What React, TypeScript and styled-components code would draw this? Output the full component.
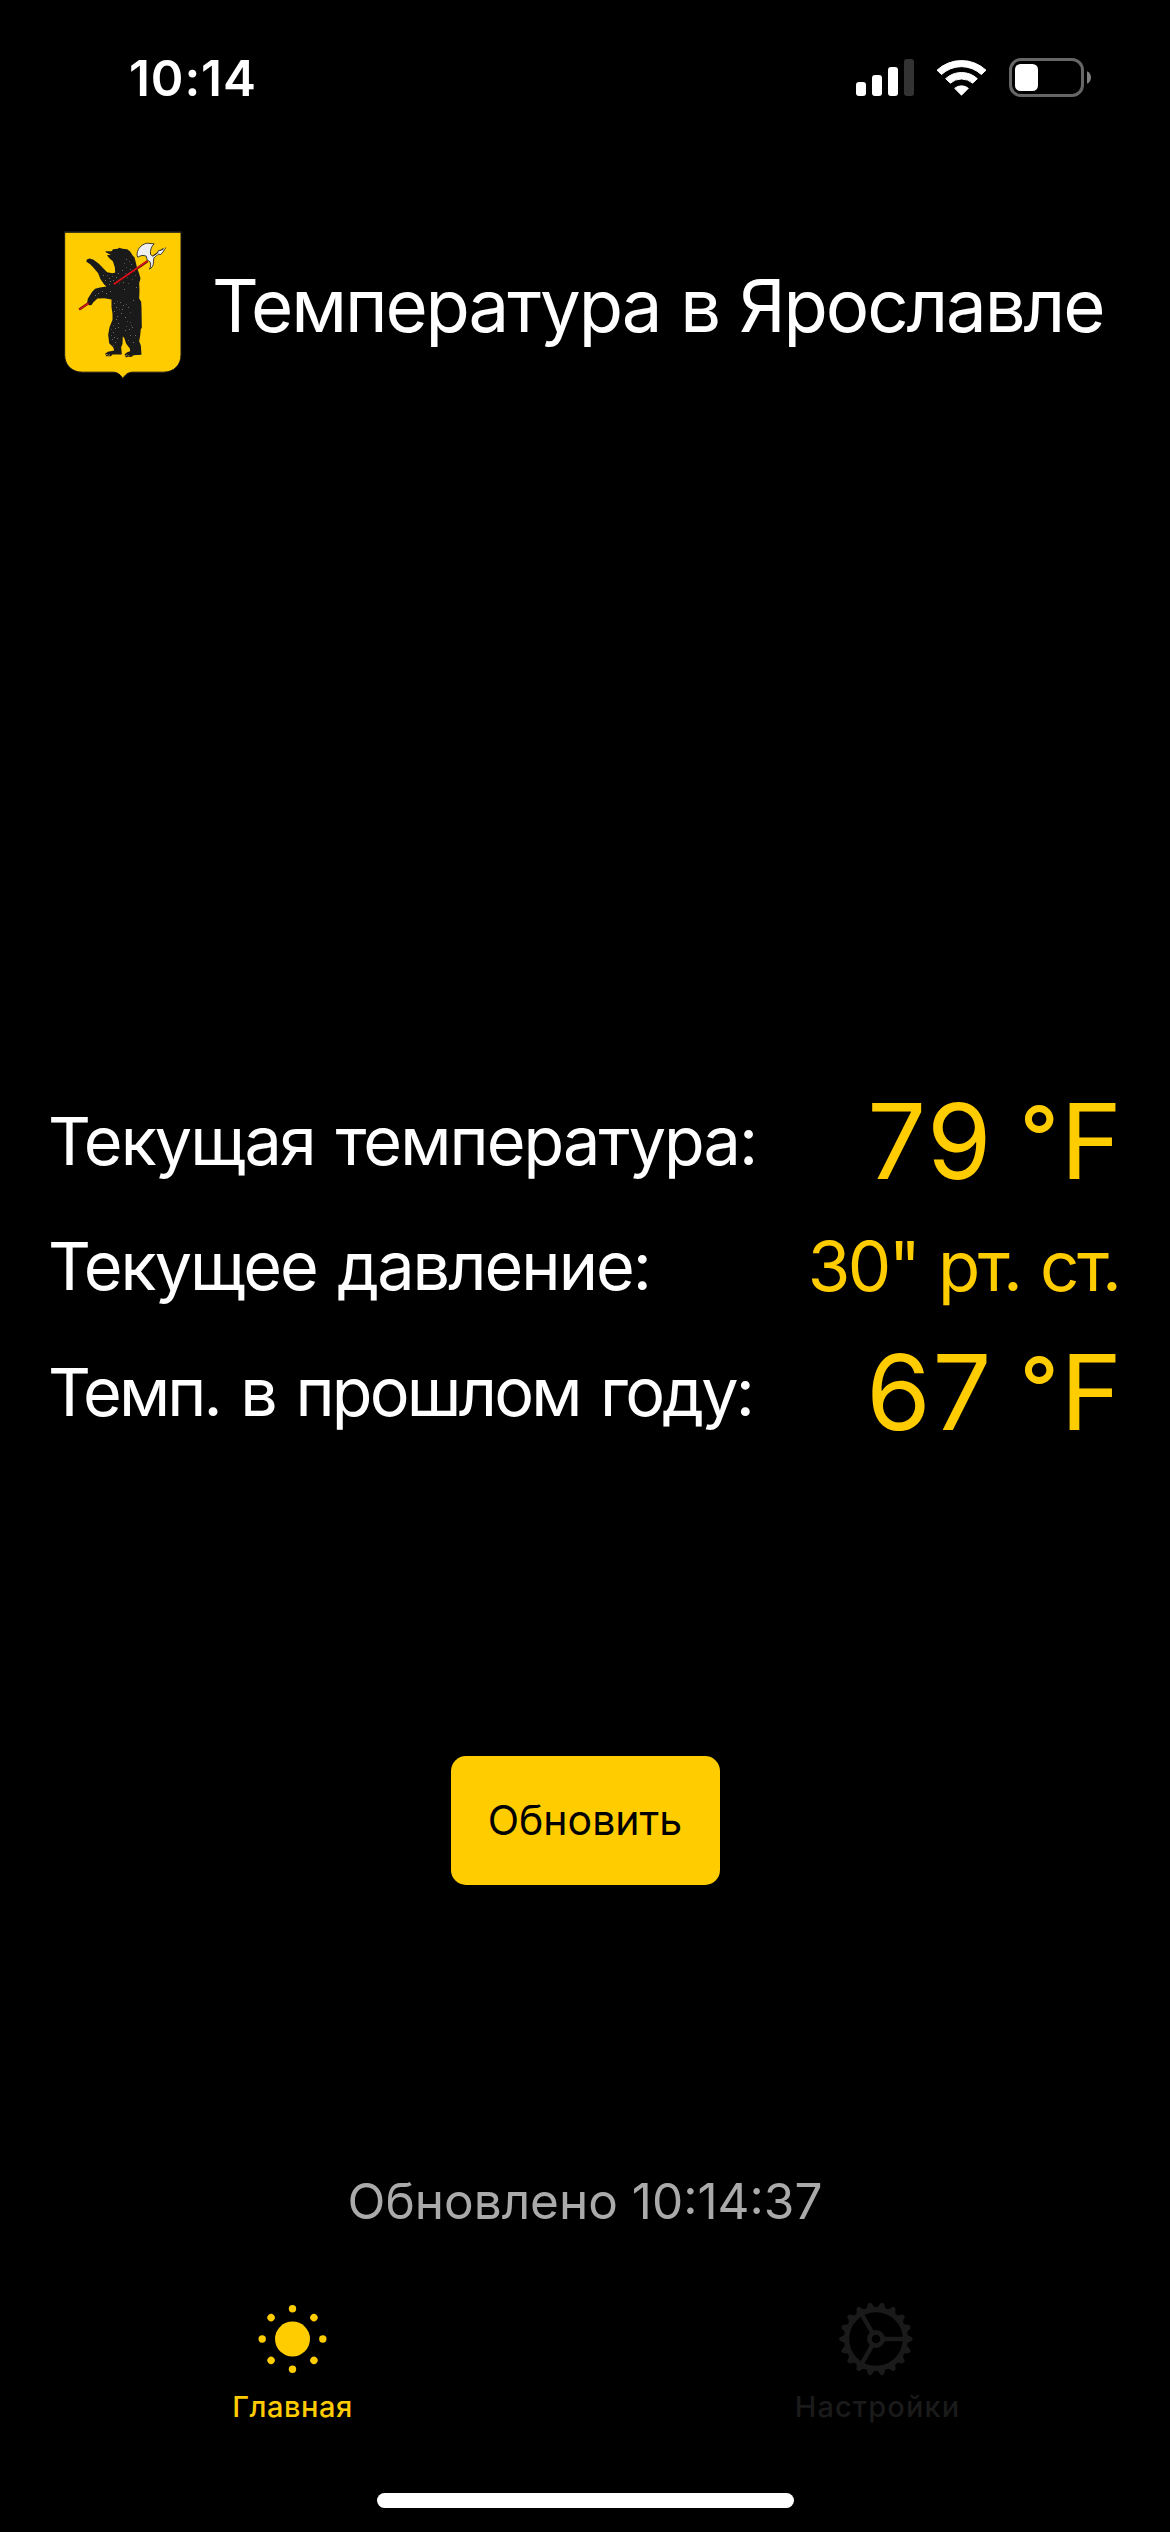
import React from "react";
import styled, { createGlobalStyle } from "styled-components";

const yellow = "#ffcc00";

const GlobalStyle = createGlobalStyle`
  * { box-sizing: border-box; }
  html, body { margin: 0; padding: 0; background: #000; }
  body { font-family: Inter, "Liberation Sans", sans-serif; color: #fff; }
`;

const Screen = styled.div`
  display: flex;
  flex-direction: column;
  width: 1170px;
  height: 2532px;
  background: #000;
  overflow: hidden;
`;

const StatusBar = styled.div`
  display: flex;
  align-items: center;
  justify-content: space-between;
  height: 155px;
  padding: 0 79px 0 129px;
`;

const Clock = styled.span`
  font-size: 49.5px;
  line-height: 60px;
  font-weight: 600;
  letter-spacing: 0.9px;
`;

const StatusIcons = styled.div`
  display: flex;
  align-items: center;
  gap: 22px;
`;

const Header = styled.header`
  display: flex;
  align-items: center;
  gap: 30px;
  height: 149px;
  margin-top: 76px;
  padding-left: 64px;
`;

const Title = styled.h1`
  margin: 0;
  font-size: 72.5px;
  line-height: 88px;
  font-weight: 400;
  letter-spacing: -2.1px;
  word-spacing: 1.6px;
  white-space: nowrap;
`;

const Readings = styled.main`
  display: grid;
  grid-auto-rows: 125.5px;
  margin-top: 698px;
  padding: 0 48px;
`;

const Reading = styled.div`
  display: flex;
  align-items: center;
  justify-content: space-between;
`;

const Label = styled.span<{ $track: number; $word: number }>`
  font-size: 66.5px;
  line-height: 80px;
  letter-spacing: ${(p) => p.$track}px;
  word-spacing: ${(p) => p.$word}px;
  white-space: nowrap;
`;

const Value = styled.span<{ $size: number; $track: number; $word: number }>`
  margin-right: ${(p) => -p.$track}px;
  font-size: ${(p) => p.$size}px;
  line-height: 120px;
  letter-spacing: ${(p) => p.$track}px;
  word-spacing: ${(p) => p.$word}px;
  color: ${yellow};
  white-space: nowrap;
`;

const Degree = styled.span`
  font-size: 85px;
  font-weight: 500;
  line-height: 0;
  vertical-align: 12px;
`;

const RefreshButton = styled.button`
  align-self: center;
  width: 269px;
  height: 129px;
  margin-top: 301.5px;
  padding: 0 0 2px;
  border: 0;
  border-radius: 15px;
  background: ${yellow};
  color: #000;
  font-family: inherit;
  font-size: 41px;
  line-height: 50px;
`;

const Updated = styled.p`
  margin: 286px 0 0;
  text-align: center;
  font-size: 49.5px;
  line-height: 60px;
  color: #aaa;
`;

const TabBar = styled.nav`
  display: grid;
  grid-template-columns: 1fr 1fr;
  margin-top: 70px;
`;

const Tab = styled.a<{ $color: string }>`
  display: flex;
  flex-direction: column;
  align-items: center;
  gap: 12px;
  color: ${(p) => p.$color};
`;

const TabLabel = styled.span<{ $track: number }>`
  font-size: 29px;
  line-height: 36px;
  font-weight: 500;
  letter-spacing: ${(p) => p.$track}px;
`;

const HomeIndicator = styled.div`
  align-self: center;
  width: 417px;
  height: 15px;
  margin-top: 68px;
  border-radius: 8px;
  background: #fff;
`;

const Signal = () => (
  <svg width="58" height="37" viewBox="0 0 58 37" fill="#fff">
    <rect x="0" y="23" width="10" height="14" rx="3" />
    <rect x="16" y="16" width="10" height="21" rx="3" />
    <rect x="32" y="8" width="10" height="29" rx="3" />
    <rect x="48" y="0" width="10" height="37" rx="3" fill="#333" />
  </svg>
);

const Wifi = () => (
  <svg width="51" height="37" viewBox="318 57 153 111" fill="#fff" stroke="#fff" strokeWidth="3" strokeLinejoin="round">
    <path d="M321 90.500A108 108 0 0 1 468 90.500L454 103.500A87.500 87.500 0 0 0 334.500 103.500Z" />
    <path d="M347 116A70 70 0 0 1 442 116L428 129.500A51 51 0 0 0 361 129.500Z" />
    <path d="M374 145A32 32 0 0 1 415 145L394.500 165.500Z" />
  </svg>
);

const Battery = () => (
  <svg width="82" height="39" viewBox="0 0 82 39">
    <rect x="1.500" y="1.500" width="72" height="36" rx="10.500" fill="none" stroke="#666" strokeWidth="3" />
    <rect x="6" y="6" width="23" height="27" rx="5.500" fill="#fff" />
    <path d="M78 13.300C80.500 14.300 82 16.800 82 19.500S80.500 24.700 78 25.700Z" fill="#808080" />
  </svg>
);

const FUR = [
  [228, 116], [236, 124], [221, 130], [244, 133], [228, 141], [240, 148], [215, 149], [251, 152],
  [205, 160], [226, 158], [186, 168], [176, 174], [199, 172], [212, 176], [232, 170], [166, 180],
  [180, 184], [190, 180], [160, 165], [170, 166], [218, 186], [235, 188], [206, 190], [176, 192],
  [245, 178], [254, 166], [143, 218], [155, 213], [168, 220], [136, 226], [180, 212], [200, 244],
  [192, 250], [210, 247], [218, 254], [198, 260], [228, 252], [206, 268], [234, 262], [192, 274],
  [214, 280], [202, 288], [224, 290], [240, 276], [198, 298], [232, 302], [240, 306], [188, 316],
  [244, 314], [228, 318], [184, 326], [196, 324], [236, 326], [190, 336], [204, 322], [226, 330],
  [182, 346], [192, 350], [246, 322], [186, 358], [200, 354], [196, 366], [240, 344], [256, 346],
  [188, 376], [234, 360], [250, 366], [204, 310], [216, 266], [258, 200], [250, 240], [222, 206],
];

const CoatOfArms = () => (
  <svg width="118" height="149" viewBox="43 33.500 353 447">
    <path
      d="M44.500 36H393.500V405C393.500 436 372 457 341 457H249C234 457 226 465 219 476C212 465 204 457 189 457H97C66 457 44.500 436 44.500 405Z"
      fill="#ffcc00"
      stroke="#1a1a1a"
      strokeWidth="3"
    />
    <path d="M43 33.500H396V39H43Z" fill="#1a1a1a" />
    <path
      d="M166 94L185 94L190 88L204 87L208 84L218 87L232 88L241 95L248 106L254 113L258 128L262 145L267 158L272 176L268 190L269 212L268 236L274 246L275 262L276 325L273 327L271 348L268 364L273 377L275 405L251 406L246 411L228 412L224 404L232 397L241 394L240 386L229 372L223 354L219 350L218 372L214 382L216 404L188 404L183 409L169 409L166 402L174 396L193 392L190 382L178 370L175 345L179 322L188 300L188 282L185 262L185 239L164 235L143 236L130 248L126 255L119 257L112 248L114 237L127 216L136 207L150 203L170 200L163 194L152 178L145 160L133 146L122 134L109 125L112 118L120 116L131 120L147 132L172 157L188 160L196 158L195 142L189 124L180 117L171 106L183 105L170 99Z"
      fill="#1a1a1a"
    />
    <g fill="#888" shapeRendering="crispEdges">
      {FUR.map(([x, y]) => (
        <rect key={`${x}-${y}`} x={x} y={y} width="3" height="3" opacity={(x + y) % 3 ? 0.75 : 0.45} />
      ))}
    </g>
    <path d="M88 269L118 249M192 194L293 124" stroke="#4a1010" strokeWidth="7" />
    <path d="M88 269L116 250.500M192 193L293 123" stroke="#e8101c" strokeWidth="4" />
    <path d="M296 121L341 88" stroke="#1a1a1a" strokeWidth="7" />
    <path
      d="M262 108C260 91 271 75 291 70L313 72C304 80 301 91 302 104L309 109L322 101L326 92L336 91L347 84L340 96L333 104L325 103L312 114L311 127C311 138 306 144 299 148C304 139 303 130 299 124L293 122L289 109C281 105 272 107 264 112Z"
      fill="#eee"
      stroke="#1a1a1a"
      strokeWidth="2.500"
    />
    <path d="M298 122L345 86" stroke="#fff" strokeWidth="3" strokeDasharray="6 3" />
    <path d="M168 405L174 404M176 409L179 404M227 407L233 405M234 411L238 406" stroke="#ffd84a" strokeWidth="2" />
  </svg>
);

const Sun = () => (
  <svg width="74" height="76" viewBox="-36.500 -38 74 76" fill="currentColor">
    <circle r="17.500" />
    {Array.from({ length: 8 }, (_, i) => (
      <circle key={i} cx="30.300" r="3.700" transform={`rotate(${i * 45})`} />
    ))}
  </svg>
);

const Gear = () => (
  <svg width="78" height="76" viewBox="-37 -38 78 76" fill="none" stroke="currentColor">
    <circle r="29.400" strokeWidth="5.200" />
    <circle r="6.600" strokeWidth="4.600" />
    {[0, 120, 240].map((a) => (
      <path key={a} d="M8 0H28" strokeWidth="4.400" transform={`rotate(${a})`} />
    ))}
    {Array.from({ length: 18 }, (_, i) => (
      <path
        key={i}
        d="M30.500 -4.600L36 -1.700Q37.600 0 36 1.700L30.500 4.600Z"
        fill="currentColor"
        stroke="none"
        transform={`rotate(${i * 20})`}
      />
    ))}
  </svg>
);

export default function App() {
  return (
    <Screen>
      <GlobalStyle />
      <StatusBar>
        <Clock>10:14</Clock>
        <StatusIcons>
          <Signal />
          <Wifi />
          <Battery />
        </StatusIcons>
      </StatusBar>
      <Header>
        <CoatOfArms />
        <Title>Температура в Ярославле</Title>
      </Header>
      <Readings>
        <Reading>
          <Label $track={-1.9} $word={3.8}>Текущая температура:</Label>
          <Value $size={104} $track={2} $word={-5}>79 <Degree>°</Degree>F</Value>
        </Reading>
        <Reading>
          <Label $track={-1.95} $word={3.8}>Текущее давление:</Label>
          <Value $size={69} $track={-2.6} $word={3}>30" рт. ст.</Value>
        </Reading>
        <Reading>
          <Label $track={-2.8} $word={4.5}>Темп. в прошлом году:</Label>
          <Value $size={104} $track={2} $word={-5}>67 <Degree>°</Degree>F</Value>
        </Reading>
      </Readings>
      <RefreshButton>Обновить</RefreshButton>
      <Updated>Обновлено 10:14:37</Updated>
      <TabBar>
        <Tab $color={yellow}>
          <Sun />
          <TabLabel $track={0.5}>Главная</TabLabel>
        </Tab>
        <Tab $color="#1a1a1a">
          <Gear />
          <TabLabel $track={1.1}>Настройки</TabLabel>
        </Tab>
      </TabBar>
      <HomeIndicator />
    </Screen>
  );
}
